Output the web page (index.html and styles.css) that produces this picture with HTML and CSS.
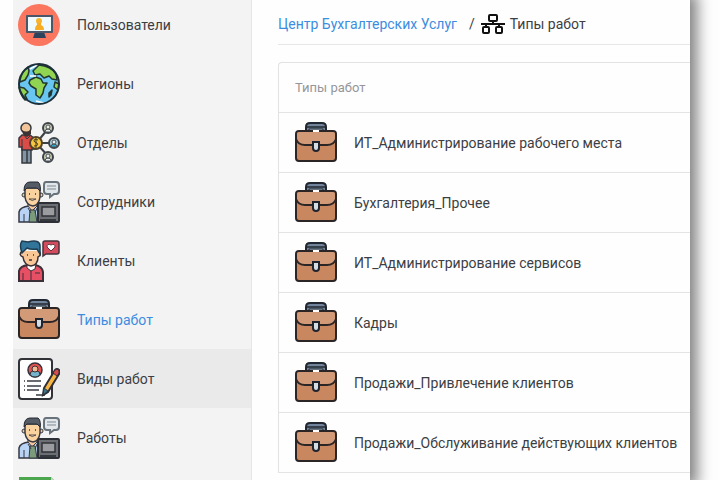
FILE: index.html
```html
<!DOCTYPE html>
<html lang="ru">
<head>
    <meta charset="utf-8">
    <title>Типы работ</title>
    <link rel="stylesheet" href="styles.css">
</head>
<body>
    <!-- Shared icons -->
    <svg class="sprite" aria-hidden="true">
        <symbol id="briefcase" viewBox="0 0 42 42">
            <path d="M11 9V5q0-4 4-4h12q4 0 4 4v4" fill="#71849b" stroke="#222831" stroke-width="2"/>
            <path d="M12 5h18" stroke="#222831" stroke-width="1.5"/>
            <path d="M14 9V7h14v2" fill="#b9c6d5" stroke="#222831" stroke-width="1"/>
            <rect x="1" y="9" width="40" height="30" rx="3" fill="#c98760" stroke="#2b2525" stroke-width="2"/>
            <path d="M2 12q0-2 3-2h32q3 0 3 2v6q-2 6-8 6H10q-6 0-8-6z" fill="#d39a78"/>
            <path d="M1 17q2 6 9 6h22q7 0 9-6" fill="none" stroke="#2b2525" stroke-width="2"/>
            <path d="M18 9h6" stroke="#fff" stroke-width="2"/>
            <path d="M18 20h6v6q0 3-3 3t-3-3z" fill="#d5dde5" stroke="#20242c" stroke-width="2"/>
        </symbol>
        <symbol id="worker" viewBox="0 0 42 42">
            <path d="M1 41V31q1-5 10-6h7q6 1 7 6v10z" fill="#b9d3f5" stroke="#343944" stroke-width="1.5"/>
            <path d="M10 25l4 5 5-5v-4h-9z" fill="#f3c69e" stroke="#343944"/>
            <path d="M12 29h5l2 12h-8z" fill="#7b9b7b" stroke="#343944"/>
            <path d="M6 33v8M10 27l3 5M19 27l-2 5" stroke="#343944" fill="none"/>
            <circle cx="6" cy="14" r="2" fill="#f5ca93" stroke="#343944"/>
            <circle cx="23" cy="14" r="2" fill="#f5ca93" stroke="#343944"/>
            <path d="M7 7h15v9q-1 8-7 9-7-1-8-9z" fill="#f9d29f" stroke="#343944" stroke-width="1.5"/>
            <path d="M6 10Q6 1 12 1h8q3 2 2 9l-3-3H9z" fill="#555c66" stroke="#252a32"/>
            <path d="M11 13h1M17 13h1" stroke="#333" stroke-width="1.5"/>
            <path d="M11 18q3 3 7 0z" fill="#fff" stroke="#594b3b"/>
            <path d="M28 1h10q3 0 3 3v6q0 3-3 3h-2l-4 3v-3h-3q-3 0-3-3V4q0-3 2-3z" fill="#e0e6e9" stroke="#68727b" stroke-width="2"/>
            <path d="M29 5h9M29 8h9" stroke="#7d8991"/>
            <rect x="20" y="22" width="21" height="19" rx="1" fill="#6b6e73" stroke="#2d3036" stroke-width="2"/>
            <rect x="24" y="26" width="13" height="9" fill="#9a9ca0" stroke="#303238" stroke-width="1.5"/>
            <path d="M22 39h16" stroke="#35383c" stroke-width="2"/>
        </symbol>
    </svg>

    <div class="window">
        <nav class="sidebar">
            <a class="nav-item" href="#">
                <svg class="icon" viewBox="0 0 42 42">
                    <circle cx="21" cy="21" r="21" fill="#fb765f"/>
                    <path d="M17 28h9l2 6H15z" fill="#2d425c"/>
                    <rect x="8" y="11" width="27" height="18" rx="1" fill="#4a5768"/>
                    <rect x="10" y="13" width="23" height="14" fill="#effaff"/>
                    <circle cx="21" cy="17" r="3" fill="#f8b52c"/>
                    <path d="M19 19h4v2q3 1 3 5H17q0-4 2-5z" fill="#f8ac22"/>
                </svg>
                <span>Пользователи</span>
            </a>
            <a class="nav-item" href="#">
                <svg class="icon" viewBox="0 0 42 42">
                    <circle cx="21" cy="21" r="20" fill="#68c6f1"/>
                    <g fill="#91d451" stroke="#23372f" stroke-width="1.5" stroke-linejoin="round">
                        <path d="M2 17Q4 8 10 4l1 4-1 4-3 5-5 2z"/>
                        <path d="M15 8l6-6q12 1 17 9l1 6-5-1-3-3-5 2-4-4-5 1z"/>
                        <path d="M12 17l6-3 5 2 2 4h4l-3 5-1 5-3 5-4-3v-6l-5-3-2-3z"/>
                        <path d="M1 24l5 1 4 4-3 3 2 4-2 1Q2 32 1 24z"/>
                        <path d="M31 30l3-3-1 5-2 2z" fill="#234"/>
                        <path d="M37 19l4 2-1 6-4-3z"/>
                    </g>
                    <path d="M12 6l7-4M18 38l8 2M12 13h6" stroke="#fff" stroke-width="1.5"/>
                    <circle cx="21" cy="21" r="20" fill="none" stroke="#1d3039" stroke-width="2"/>
                </svg>
                <span>Регионы</span>
            </a>
            <a class="nav-item" href="#">
                <svg class="icon" viewBox="0 0 42 42">
                    <path d="M20 19l9-11M22 21h12M20 23l10 11" stroke="#3d4145" stroke-width="2"/>
                    <path d="M4 24h9v17H9V28v13H4z" fill="#8395a5" stroke="#35383e" stroke-width="1.5"/>
                    <path d="M1 16l3-3h8l5 4v10h-3v1H4v-3H1z" fill="#d94c47" stroke="#35383e" stroke-width="1.5"/>
                    <path d="M4 17v8M6 13l3 4 4-4" stroke="#35383e" fill="none"/>
                    <circle cx="8" cy="6" r="5" fill="#f2c49a" stroke="#35383e" stroke-width="1.5"/>
                    <path d="M4 8q4 3 9 0v4l-4 3-4-3z" fill="#3b3233"/>
                    <circle cx="18" cy="21" r="6" fill="#f6c740" stroke="#514328" stroke-width="2"/>
                    <path d="M20 18q-4-2-4 1 0 1 3 2 2 3-3 3M18 16v10" fill="none" stroke="#463a26"/>
                    <g stroke="#3f4449" stroke-width="2">
                        <circle cx="30" cy="6" r="5" fill="#c8ccad"/>
                        <circle cx="36" cy="21" r="5" fill="#a8cddd"/>
                        <circle cx="30" cy="35" r="5" fill="#c8ccad"/>
                    </g>
                    <g fill="#eee" stroke="#4b5158">
                        <path d="M27 10q0-3 3-3t3 3z"/><circle cx="30" cy="5" r="2"/>
                        <path d="M33 25q0-3 3-3t3 3z" fill="#2caacb"/><circle cx="36" cy="20" r="2"/>
                        <path d="M27 39q0-3 3-3t3 3z"/><circle cx="30" cy="34" r="2"/>
                    </g>
                </svg>
                <span>Отделы</span>
            </a>
            <a class="nav-item" href="#">
                <svg class="icon"><use href="#worker"/></svg>
                <span>Сотрудники</span>
            </a>
            <a class="nav-item" href="#">
                <svg class="icon" viewBox="0 0 42 42">
                    <path d="M1 41V31q1-5 9-6h7q7 1 8 7v9z" fill="#e74f64" stroke="#3b3038" stroke-width="2"/>
                    <path d="M9 24h9l-1 5-4 2-4-3z" fill="#fff" stroke="#3b3038"/>
                    <path d="M5 33v8M13 31v9M17 33h5" stroke="#3b3038" fill="none"/>
                    <path d="M4 11q-4 4 1 6 1 8 8 9 7-1 7-9 4-2 1-6" fill="#f9c795" stroke="#3b3038" stroke-width="1.5"/>
                    <path d="M4 13Q1 5 4 1l6 1q12-3 12 4v8l-3-5q-6 1-10-1z" fill="#31759b" stroke="#203e51" stroke-width="1.5"/>
                    <path d="M9 15h1M15 15h1M11 20h3" stroke="#3b3038" stroke-width="1.5"/>
                    <path d="M27 1h12q2 0 2 2v9q0 2-2 2H28l-3 2V3q0-2 2-2z" fill="#d54b5e" stroke="#43333b" stroke-width="1.5"/>
                    <path d="M33 11l-4-4q0-4 4-2 4-2 4 2z" fill="#fff" stroke="#623640"/>
                </svg>
                <span>Клиенты</span>
            </a>
            <a class="nav-item current" href="#">
                <svg class="icon"><use href="#briefcase"/></svg>
                <span>Типы работ</span>
            </a>
            <a class="nav-item hovered" href="#">
                <svg class="icon" viewBox="0 0 42 42">
                    <path d="M4 1h27q3 0 3 3v34q0 3-3 3H4q-3 0-3-3V4q0-3 3-3z" fill="#fff" stroke="#303238" stroke-width="2"/>
                    <circle cx="17" cy="12" r="7" fill="#e65151" stroke="#353139" stroke-width="1.5"/>
                    <path d="M12 17q0-4 3-4h4q3 0 3 4-5 4-10 0z" fill="#76b4cc" stroke="#353139"/>
                    <circle cx="17" cy="11" r="3" fill="#f1bb91" stroke="#353139"/>
                    <path d="M9 23h14M9 28h14M9 32h12M18 37h9M6 23h1M6 28h1M6 32h1" stroke="#383b41" stroke-width="1.5"/>
                    <path d="M25 37l1-7 11-18q2-2 4 0t0 4L30 34z" fill="#f4b545" stroke="#312f35" stroke-width="2"/>
                    <path d="M35 15l4 3 2-3q1-3-2-4-2 0-4 4z" fill="#d94b4e" stroke="#312f35"/>
                    <path d="M25 37l1-7 4 3z" fill="#407389" stroke="#293a43"/>
                </svg>
                <span>Виды работ</span>
            </a>
            <a class="nav-item" href="#">
                <svg class="icon"><use href="#worker"/></svg>
                <span>Работы</span>
            </a>
            <a class="nav-item" href="#">
                <svg class="icon" viewBox="0 0 42 42">
                    <path d="M1 1h32l8 8v32H1z" fill="#4ba64e"/>
                    <path d="M33 1l8 8h-8z" fill="#c9d4ca"/>
                </svg>
            </a>
        </nav>

        <main class="content">
            <div class="breadcrumb">
                <a href="#">Центр Бухгалтерских Услуг</a>
                <span class="slash">/</span>
                <svg class="tree-icon" viewBox="0 0 24 20" fill="none" stroke="#111" stroke-width="2">
                    <rect x="8" y="1" width="8" height="6" rx="1"/>
                    <rect x="2" y="13" width="6" height="6" rx="1"/>
                    <rect x="15" y="13" width="6" height="6" rx="1"/>
                    <path d="M12 7v3M0 10h24M5 10v3M18 10v3"/>
                </svg>
                <span>Типы работ</span>
            </div>

            <div class="card">
                <table class="types">
                    <thead>
                        <tr><th colspan="2">Типы работ</th></tr>
                    </thead>
                    <tbody>
                        <tr>
                            <td class="icon-cell"><svg class="icon"><use href="#briefcase"/></svg></td>
                            <td>ИТ_Администрирование рабочего места</td>
                        </tr>
                        <tr>
                            <td class="icon-cell"><svg class="icon"><use href="#briefcase"/></svg></td>
                            <td>Бухгалтерия_Прочее</td>
                        </tr>
                        <tr>
                            <td class="icon-cell"><svg class="icon"><use href="#briefcase"/></svg></td>
                            <td>ИТ_Администрирование сервисов</td>
                        </tr>
                        <tr>
                            <td class="icon-cell"><svg class="icon"><use href="#briefcase"/></svg></td>
                            <td>Кадры</td>
                        </tr>
                        <tr>
                            <td class="icon-cell"><svg class="icon"><use href="#briefcase"/></svg></td>
                            <td>Продажи_Привлечение клиентов</td>
                        </tr>
                        <tr>
                            <td class="icon-cell"><svg class="icon"><use href="#briefcase"/></svg></td>
                            <td>Продажи_Обслуживание действующих клиентов</td>
                        </tr>
                    </tbody>
                </table>
            </div>
        </main>
    </div>
</body>
</html>
```

FILE: styles.css
```css
* {
    box-sizing: border-box;
}

body {
    margin: 0;
    height: 100vh;
    overflow: hidden;
    background: #fefefe;
    color: #3c3e44;
    font-family: Roboto, "Liberation Sans", sans-serif;
    font-size: 14px;
    line-height: 20px;
}

a {
    color: #3c8de0;
    text-decoration: none;
}

.sprite {
    display: none;
}

.window {
    display: flex;
    height: 100vh;
    margin: 0 30px 0 13px;
    background: #fefefe;
    box-shadow: 0 0 14px 7px rgba(0, 0, 0, 0.5);
    /* keep the shadow on the right side only */
    clip-path: inset(0 -30px 0 0);
}

/* Left menu, scrolled a little */
.sidebar {
    flex: 0 0 239px;
    overflow: hidden;
    background: #f3f3f3;
    border-right: 1px solid #e6e6e6;
}

.nav-item {
    display: flex;
    align-items: center;
    gap: 17px;
    height: 59px;
    padding-left: 5px;
    color: #3c3e44;
}

.nav-item:first-child {
    margin-top: -5px;
}

.nav-item.current {
    color: #3c8de0;
}

.nav-item.hovered,
.nav-item:hover {
    background: #eaeaea;
}

.icon {
    display: block;
    flex: none;
    width: 42px;
    height: 42px;
}

/* Right part */
.content {
    flex: 1;
    min-width: 0;
    padding-left: 26px;
    overflow: hidden;
}

.breadcrumb {
    display: flex;
    align-items: center;
    height: 45px;
    padding-top: 3px;
    border-bottom: 1px solid #e6e6e6;
    white-space: nowrap;
}

.slash {
    margin: 0 6px 0 12px;
}

.tree-icon {
    width: 24px;
    height: 20px;
    margin-right: 5px;
}

.card {
    margin-top: 17px;
    border: 1px solid #e2e2e2;
    border-width: 1px 0 0 1px;
    border-radius: 4px 0 0 0;
}

.types {
    width: 100%;
    border-collapse: separate;
    border-spacing: 0;
    white-space: nowrap;
}

.types th {
    height: 50px;
    padding: 0 16px;
    border-bottom: 1px solid #e4e4e4;
    color: #96969a;
    font-size: 13px;
    font-weight: normal;
    text-align: left;
}

.types td {
    height: 60px;
    padding: 0;
    border-bottom: 1px solid #e4e4e4;
}

.types .icon-cell {
    width: 75px;
    padding-left: 16px;
}
```
